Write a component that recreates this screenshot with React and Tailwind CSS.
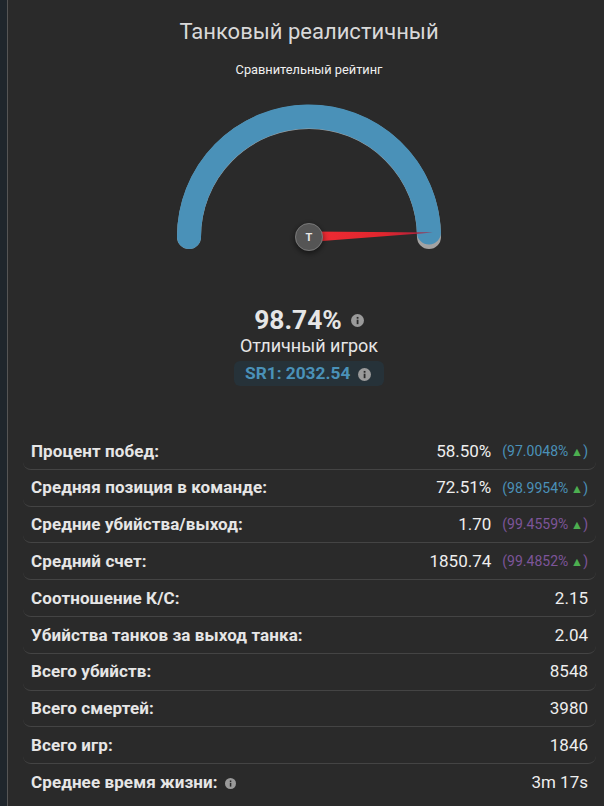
import React from 'react';

const rows = [
  { label: 'Процент побед:', value: '58.50%', pct: '97.0048%', color: 'text-[#4a91b8]' },
  { label: 'Средняя позиция в команде:', value: '72.51%', pct: '98.9954%', color: 'text-[#4a91b8]' },
  { label: 'Средние убийства/выход:', value: '1.70', pct: '99.4559%', color: 'text-[#7d5599]' },
  { label: 'Средний счет:', value: '1850.74', pct: '99.4852%', color: 'text-[#7d5599]' },
  { label: 'Соотношение К/С:', value: '2.15' },
  { label: 'Убийства танков за выход танка:', value: '2.04' },
  { label: 'Всего убийств:', value: '8548' },
  { label: 'Всего смертей:', value: '3980' },
  { label: 'Всего игр:', value: '1846' },
  { label: 'Среднее время жизни:', value: '3m 17s', info: true },
];

function InfoIcon({ size = 11 }) {
  return (
    <svg width={size} height={size} viewBox="0 0 16 16" className="shrink-0">
      <circle cx="8" cy="8" r="8" fill="#9a9a9a" />
      <rect x="7" y="7" width="2.2" height="5.5" fill="#2a2a2a" />
      <rect x="7" y="3.6" width="2.2" height="2.2" fill="#2a2a2a" />
    </svg>
  );
}

function Gauge() {
  return (
    <svg width="290" height="170" viewBox="0 0 290 170" className="block">
      <defs>
        <filter id="hubShadow" x="-50%" y="-50%" width="200%" height="200%">
          <feDropShadow dx="0" dy="2" stdDeviation="3" floodColor="#000" floodOpacity="0.6" />
        </filter>
        <linearGradient id="needleFade" x1="0" x2="1" y1="0" y2="0">
          <stop offset="0" stopColor="#f02c34" />
          <stop offset="0.6" stopColor="#e0262e" />
          <stop offset="1" stopColor="#a02040" />
        </linearGradient>
      </defs>
      {/* track */}
      <path d="M 25 140 A 120 120 0 0 1 265 140" fill="none" stroke="#a3a3a3" strokeWidth="24" strokeLinecap="round" />
      {/* value */}
      <path d="M 25 140 A 120 120 0 0 1 264.93 135.5" fill="none" stroke="#4a91b8" strokeWidth="24" strokeLinecap="round" />
      {/* needle */}
      <polygon points="145,134.6 269,135.5 145,145" fill="url(#needleFade)" />
      <circle cx="145" cy="140" r="13.5" fill="#555" stroke="#777" strokeWidth="1" filter="url(#hubShadow)" />
      <text x="145" y="144" textAnchor="middle" fontSize="11" fontWeight="700" fill="#e8e8e8" fontFamily="Roboto, sans-serif">T</text>
    </svg>
  );
}

export default function App() {
  return (
    <div className="h-[806px] w-[604px] overflow-hidden bg-[#1f262c] pl-[7px] font-['Roboto',sans-serif]">
      <div className="h-full border-l border-[#555] bg-[#2a2a2a] pr-2 pl-[15px]">
        <div className="flex flex-col items-center pr-[1px]">
          <h1 className="pt-[19px] text-[22px] leading-[26px] text-[#d9d9d9]">Танковый реалистичный</h1>
          <div className="mt-[17px] text-[12.8px] leading-[16px] text-[#f0f0f0]">Сравнительный рейтинг</div>
          <div className="mt-[19px]">
            <Gauge />
          </div>
          <div className="mt-[38px] flex items-center gap-[9px]">
            <span className="text-[26.4px] leading-[30px] font-bold text-[#e6e6e6]">98.74%</span>
            <InfoIcon size={13} />
          </div>
          <div className="text-[18px] leading-[22px] text-[#e6e6e6]">Отличный игрок</div>
          <div className="mt-[4px] flex h-[25px] w-[150px] items-center rounded-md bg-[#263239] pl-[11px]">
            <span className="text-[17.3px] font-bold text-[#4a91b8]">SR1: 2032.54</span>
            <span className="ml-[8px] pt-[2px]"><InfoIcon size={13} /></span>
          </div>
        </div>
        <div className="mt-[47px]">
          {rows.map((row, i) => (
            <div
              key={row.label}
              className={`flex h-[36.8px] items-center justify-between rounded-b-lg px-2 pt-[1px] text-[17px] text-[#e6e6e6] ${i < rows.length - 1 ? 'border-b border-[#444]' : ''}`}
            >
              <span className="flex items-center gap-[7px] font-bold tracking-[0.1px]">
                {row.label}
                {row.info && <InfoIcon size={11} />}
              </span>
              <span className="flex items-center">
                <span className="text-[#eeeeee]">{row.value}</span>
                {row.pct && (
                  <span className={`ml-[11px] text-[14px] ${row.color}`}>
                    ({row.pct} <span className="-ml-[1px] text-[12.5px] text-[#4caf50]">▲</span>)
                  </span>
                )}
              </span>
            </div>
          ))}
        </div>
      </div>
    </div>
  );
}
